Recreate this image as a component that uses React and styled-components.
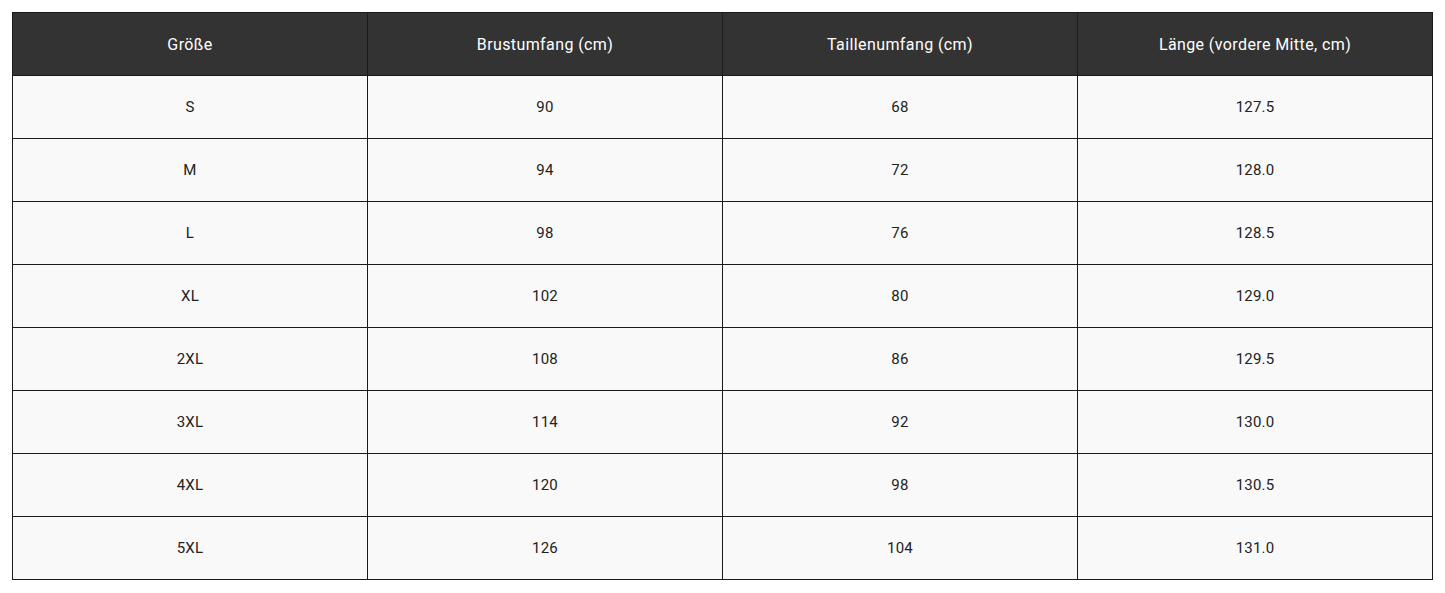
import React from "react";
import styled, { createGlobalStyle } from "styled-components";

const GlobalStyle = createGlobalStyle`
  body {
    margin: 0;
    padding: 12px;
    background: #ffffff;
    font-family: Roboto, "Open Sans", "Liberation Sans", sans-serif;
  }
`;

const Table = styled.table`
  width: 1421px;
  border-collapse: collapse;
  border: 1.5px solid #2a2a2a;
  table-layout: fixed;
`;

const HeadCell = styled.th`
  background: #333333;
  color: #ffffff;
  font-weight: 400;
  font-size: 16px;
  letter-spacing: 0.4px;
  height: 62px;
  padding: 0;
  text-align: center;
  border: 1.5px solid #1a1a1a;
`;

const Cell = styled.td`
  background: #f9f9f9;
  color: #222222;
  font-size: 15px;
  letter-spacing: 0.2px;
  height: 62px;
  padding: 0;
  text-align: center;
  border: 1.5px solid #1a1a1a;
`;

const headers = [
  "Größe",
  "Brustumfang (cm)",
  "Taillenumfang (cm)",
  "Länge (vordere Mitte, cm)",
];

const rows = [
  ["S", "90", "68", "127.5"],
  ["M", "94", "72", "128.0"],
  ["L", "98", "76", "128.5"],
  ["XL", "102", "80", "129.0"],
  ["2XL", "108", "86", "129.5"],
  ["3XL", "114", "92", "130.0"],
  ["4XL", "120", "98", "130.5"],
  ["5XL", "126", "104", "131.0"],
];

function App() {
  return (
    <>
      <GlobalStyle />
      <Table>
        <thead>
          <tr>
            {headers.map((h) => (
              <HeadCell key={h}>{h}</HeadCell>
            ))}
          </tr>
        </thead>
        <tbody>
          {rows.map((r) => (
            <tr key={r[0]}>
              {r.map((v, i) => (
                <Cell key={i}>{v}</Cell>
              ))}
            </tr>
          ))}
        </tbody>
      </Table>
    </>
  );
}

export default App;
